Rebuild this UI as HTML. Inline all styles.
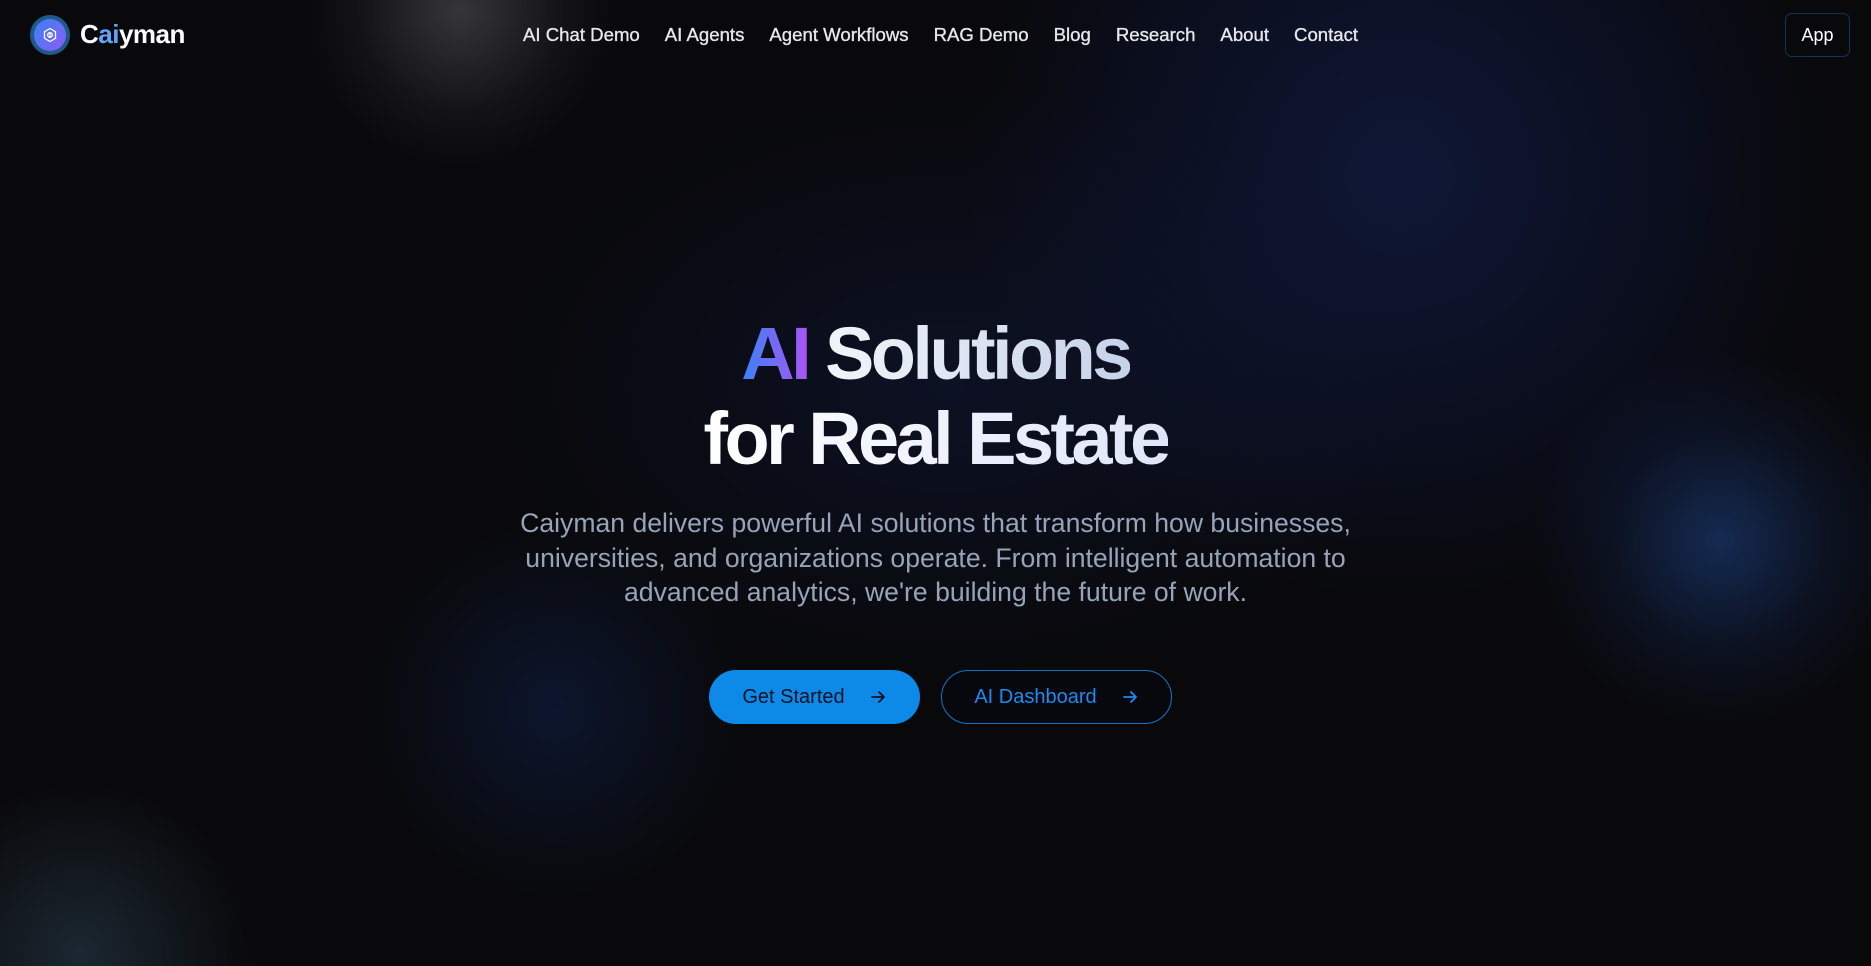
<!DOCTYPE html>
<html><head><meta charset="utf-8"><style>
*{margin:0;padding:0;box-sizing:border-box}
html,body{width:1871px;height:966px;overflow:hidden}
body{font-family:"Liberation Sans",sans-serif;background:#09090b;position:relative;color:#fff}
.wrap{position:absolute;left:0;top:0;width:1871px;height:966px;overflow:hidden}
.g{position:absolute;border-radius:50%;pointer-events:none}
nav{position:absolute;top:0;left:0;width:100%;height:72px}
.logo{position:absolute;left:30px;top:15px;width:40px;height:40px;border-radius:50%;background:#1e5a8c;display:flex;align-items:center;justify-content:center}
.logo div{width:32px;height:32px;border-radius:50%;background:linear-gradient(135deg,#3b82f6,#8b5cf6);display:flex;align-items:center;justify-content:center}
.brand{position:absolute;left:80px;top:19px;font-size:26px;font-weight:bold;letter-spacing:-0.5px}
.links{position:absolute;left:523px;top:24px;display:flex;gap:25px;font-size:18.6px;color:#e5e7eb;-webkit-text-stroke:0.35px #e5e7eb}
.app{position:absolute;left:1785px;top:13px;width:65px;height:44px;border:1px solid #153353;border-radius:7px;font-size:18px;display:flex;align-items:center;justify-content:center}
h1{position:absolute;left:0;width:100%;text-align:center;font-size:74px;font-weight:bold;letter-spacing:-3.6px;line-height:85px;top:311px}
.grad{background:linear-gradient(90deg,#3b82f6,#a855f7);-webkit-background-clip:text;color:transparent}
.l1{background:linear-gradient(90deg,#f1f5f9,#c7d2ea);-webkit-background-clip:text;color:transparent}
.l2{background:linear-gradient(90deg,#fff,#dfe6fa);-webkit-background-clip:text;color:transparent}
p{position:absolute;left:0;width:100%;text-align:center;top:506px;font-size:26.6px;line-height:34.5px;color:#97a3b8}
.btn{position:absolute;top:670px;height:54px;border-radius:27px;display:flex;align-items:center;justify-content:center;gap:24px;font-size:20px}
</style></head><body><div class="wrap">
<div class="g" style="left:300px;top:-150px;width:320px;height:320px;background:radial-gradient(circle,rgba(90,90,95,.55),rgba(60,60,65,.2) 45%,transparent 70%)"></div>
<div class="g" style="left:950px;top:-250px;width:900px;height:850px;background:radial-gradient(circle,rgba(20,35,90,.55),rgba(15,25,70,.3) 45%,transparent 70%)"></div>
<div class="g" style="left:450px;top:60px;width:1000px;height:650px;background:radial-gradient(ellipse,rgba(15,25,60,.5),transparent 65%)"></div>
<div class="g" style="left:1530px;top:350px;width:380px;height:380px;background:radial-gradient(circle,rgba(30,70,140,.55),rgba(20,40,90,.28) 40%,transparent 70%)"></div>
<div class="g" style="left:330px;top:520px;width:450px;height:380px;background:radial-gradient(circle,rgba(20,45,110,.35),transparent 65%)"></div>
<div class="g" style="left:-120px;top:780px;width:400px;height:350px;background:radial-gradient(circle,rgba(50,75,95,.45),transparent 65%)"></div>
<nav>
<div class="logo"><div><svg width="16" height="16" viewBox="0 0 16 16" fill="none" stroke="#fff" stroke-width="1.3"><path d="M8 1.5l5.5 3.2v6.6L8 14.5 2.5 11.3V4.7z"/><circle cx="8" cy="8" r="2.3"/><path d="M8 5v6"/></svg></div></div>
<div class="brand">C<span style="color:#60a5fa">ai</span>yman</div>
<div class="links"><span>AI Chat Demo</span><span>AI Agents</span><span>Agent Workflows</span><span>RAG Demo</span><span>Blog</span><span>Research</span><span>About</span><span>Contact</span></div>
<div class="app">App</div>
</nav>
<h1><span class="grad">AI</span> <span class="l1">Solutions</span><br><span class="l2">for Real Estate</span></h1>
<p>Caiyman delivers powerful AI solutions that transform how businesses,<br>universities, and organizations operate. From intelligent automation to<br>advanced analytics, we're building the future of work.</p>
<div class="btn" style="left:709px;width:211px;background:#0d8ae8;color:#0b1220">Get Started <svg width="18" height="18" viewBox="0 0 18 18" fill="none" stroke="#0b1220" stroke-width="1.8" stroke-linecap="round" stroke-linejoin="round"><path d="M3 9h12M10 4l5 5-5 5"/></svg></div>
<div class="btn" style="left:941px;width:231px;border:1px solid #1670c9;color:#1a8cf0;background:rgba(5,8,15,.6)">AI Dashboard <svg width="18" height="18" viewBox="0 0 18 18" fill="none" stroke="#1a8cf0" stroke-width="1.8" stroke-linecap="round" stroke-linejoin="round"><path d="M3 9h12M10 4l5 5-5 5"/></svg></div>
</div></body></html>
